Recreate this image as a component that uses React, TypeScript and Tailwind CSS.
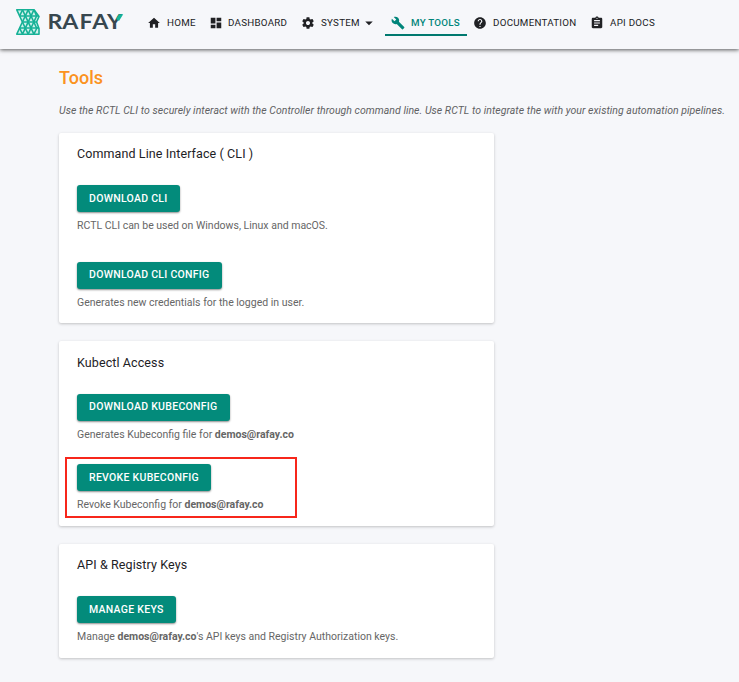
import type { ReactNode } from "react";
import {
  MdArrowDropDown,
  MdAssignment,
  MdDashboard,
  MdHelp,
  MdHome,
} from "react-icons/md";

function Logo() {
  return (
    <svg className="mt-[7px] ml-[14px] h-[30px] w-[112px] shrink-0" viewBox="14 7 112 30" aria-label="Rafay">
      <path d="M16.8 9.8H34L39 16.5L36.6 22L39 28.5V34.2H16.8L22.4 22Z" fill="#d3f2ed" />
      <g fill="none" stroke="#16b196" strokeWidth="1.6" strokeLinejoin="round">
        <path d="M16.8 9.8H34L39 16.5L36.6 22L39 28.5V34.2H16.8L22.4 22Z" />
        <path d="M19.6 16H39M22.4 22H36.6M19.6 28H39" />
        <path d="M22.5 9.8L33.9 34.2M28.2 9.8L36.6 28M34 9.8L36.6 16M22.4 22L28.2 34.2" />
        <path d="M22.5 34.2L33.9 9.8M28.2 34.2L36.6 16M33.9 34.2L37.4 27M22.4 22L28.2 9.8M19.6 16L22.5 9.8M19.6 28L22.5 34.2" />
      </g>
      <text
        transform="scale(1.13 1)"
        x="42 55.1 70.3 81.7 94.8"
        y="29.2"
        className="fill-[#37474f] font-['Lato',sans-serif] text-[20.5px] font-bold"
      >
        RAFAY
      </text>
      <path d="M118.9 14.3h4.3l-4.2 6.6-3-2z" fill="#12b59b" />
    </svg>
  );
}

function WrenchIcon({ className }: { className: string }) {
  return (
    <svg className={className} viewBox="0 0 24 24" fill="currentColor">
      <path d="M22.7 19l-9.1-9.1c.9-2.3.4-5-1.5-6.9-2-2-5-2.4-7.4-1.3L9 6 6 9 1.6 4.7C.4 7.1.9 10.1 2.9 12.1c1.9 1.9 4.6 2.4 6.9 1.5l9.1 9.1c.4.4 1 .4 1.4 0l2.3-2.3c.5-.4.5-1.1.1-1.4z" />
    </svg>
  );
}

function GearIcon({ className }: { className: string }) {
  return (
    <svg className={className} viewBox="0 0 24 24" fill="currentColor">
      <path d="M19.43 12.98c.04-.32.07-.64.07-.98s-.03-.66-.07-.98l2.11-1.65c.19-.15.24-.42.12-.64l-2-3.46c-.12-.22-.39-.3-.61-.22l-2.49 1c-.52-.4-1.08-.73-1.69-.98l-.38-2.65C14.46 2.18 14.25 2 14 2h-4c-.25 0-.46.18-.49.42l-.38 2.65c-.61.25-1.17.59-1.69.98l-2.49-1c-.23-.09-.49 0-.61.22l-2 3.46c-.13.22-.07.49.12.64l2.11 1.65c-.04.32-.07.65-.07.98s.03.66.07.98l-2.11 1.65c-.19.15-.24.42-.12.64l2 3.46c.12.22.39.3.61.22l2.49-1c.52.4 1.08.73 1.69.98l.38 2.65c.03.24.24.42.49.42h4c.25 0 .46-.18.49-.42l.38-2.65c.61-.25 1.17-.59 1.69-.98l2.49 1c.23.09.49 0 .61-.22l2-3.46c.12-.22.07-.49-.12-.64l-2.11-1.65zM12 15.5c-1.93 0-3.5-1.57-3.5-3.5s1.57-3.5 3.5-3.5 3.5 1.57 3.5 3.5-1.57 3.5-3.5 3.5z" />
    </svg>
  );
}

function NavItem({ className, icon, label }: { className: string; icon: ReactNode; label: ReactNode }) {
  return (
    <a className={`flex h-[27px] shrink-0 items-center whitespace-nowrap text-[9.75px] ${className}`}>
      {icon}
      <span className="flex h-[13px] items-center leading-[13px]">{label}</span>
    </a>
  );
}

function Card({ className, title, children }: { className: string; title: string; children: ReactNode }) {
  return (
    <section className={`w-[435px] rounded-[2px] bg-white px-[18px] shadow-[0_1px_3px_rgba(0,0,0,0.22)] ${className}`}>
      <h2 className="h-[18px] text-[12.5px] leading-[18px] tracking-[0.1px] text-[#1d2125]">{title}</h2>
      {children}
    </section>
  );
}

function Action({ className, button, label, children }: { className: string; button: string; label: string; children: ReactNode }) {
  return (
    <div className={className}>
      <button
        className={`block h-[27px] rounded-[3px] bg-[#038b7b] pl-[12px] text-left text-[10.5px] font-medium tracking-[0.28px] whitespace-nowrap text-white shadow-[0_1px_2px_rgba(0,0,0,0.45)] ${button}`}
      >
        {label}
      </button>
      <p className="mt-[6px] h-[16px] text-[10.5px] leading-[16px] whitespace-nowrap text-[#666]">{children}</p>
    </div>
  );
}

export default function App() {
  return (
    <div className="h-[682px] w-[739px] overflow-hidden bg-[#f6f7fa] font-['Roboto',sans-serif]">
      <header className="flex h-[49px] items-start text-[#202124] shadow-[0_1px_4px_rgba(0,0,0,0.65)]">
        <Logo />
        <nav className="flex pt-[9px] tracking-[0.27px]">
          <NavItem className="ml-[21px] w-[62px]" icon={<MdHome className="mr-[6px] size-[14px]" />} label="HOME" />
          <NavItem className="w-[92px]" icon={<MdDashboard className="mr-[5px] size-[14px]" />} label="DASHBOARD" />
          <NavItem
            className="w-[84px]"
            icon={<GearIcon className="mr-[6px] size-[14px]" />}
            label={<>SYSTEM <MdArrowDropDown className="size-[18px]" /></>}
          />
          <NavItem
            className="w-[82px] border-b-2 border-[#00796f] pt-[2px] pl-[6px] font-medium tracking-[0.25px] text-[#00857a]"
            icon={<WrenchIcon className="mr-[6px] size-[14px]" />}
            label="MY TOOLS"
          />
          <NavItem className="ml-[6px] w-[117px]" icon={<MdHelp className="mr-[6px] size-[14px]" />} label="DOCUMENTATION" />
          <NavItem className="w-[80px]" icon={<MdAssignment className="mr-[6px] size-[14px]" />} label="API DOCS" />
        </nav>
      </header>

      <main className="pl-[59px]">
        <h1 className="pt-[17px] text-[18px] leading-[24px] font-medium text-[#fb9220]">Tools</h1>
        <p className="mt-[13px] h-[16px] text-[10.5px] leading-[16px] tracking-[0.04px] whitespace-nowrap text-[#5f6163] italic">
          Use the RCTL CLI to securely interact with the Controller through command line. Use RCTL to integrate the with your existing automation pipelines.
        </p>

        <Card className="mt-[14px] h-[190px] pt-[12px]" title="Command Line Interface ( CLI )">
          <Action className="mt-[22px]" button="w-[103px] leading-[27px]" label="DOWNLOAD CLI">
            RCTL CLI can be used on Windows, Linux and macOS.
          </Action>
          <Action className="mt-[28px]" button="w-[145px] leading-[25px] pb-[2px]" label="DOWNLOAD CLI CONFIG">
            Generates new credentials for the logged in user.
          </Action>
        </Card>

        <Card className="mt-[18px] h-[185px] pt-[13px]" title="Kubectl Access">
          <Action className="mt-[22px]" button="w-[153px] leading-[25px] pb-[2px]" label="DOWNLOAD KUBECONFIG">
            Generates Kubeconfig file for <b>demos@rafay.co</b>
          </Action>
          <div className="mt-[14px] ml-[-12px] h-[61px] w-[232px] border-2 border-[#f7261b] pt-[5px] pl-[10px]">
            <Action className="" button="w-[134px] leading-[27px]" label="REVOKE KUBECONFIG">
              Revoke Kubeconfig for <b>demos@rafay.co</b>
            </Action>
          </div>
        </Card>

        <Card className="mt-[18px] h-[114px] pt-[12px]" title="API &amp; Registry Keys">
          <Action className="mt-[22px]" button="w-[99px] leading-[27px]" label="MANAGE KEYS">
            Manage <b>demos@rafay.co</b>&apos;s API keys and Registry Authorization keys.
          </Action>
        </Card>
      </main>
    </div>
  );
}
